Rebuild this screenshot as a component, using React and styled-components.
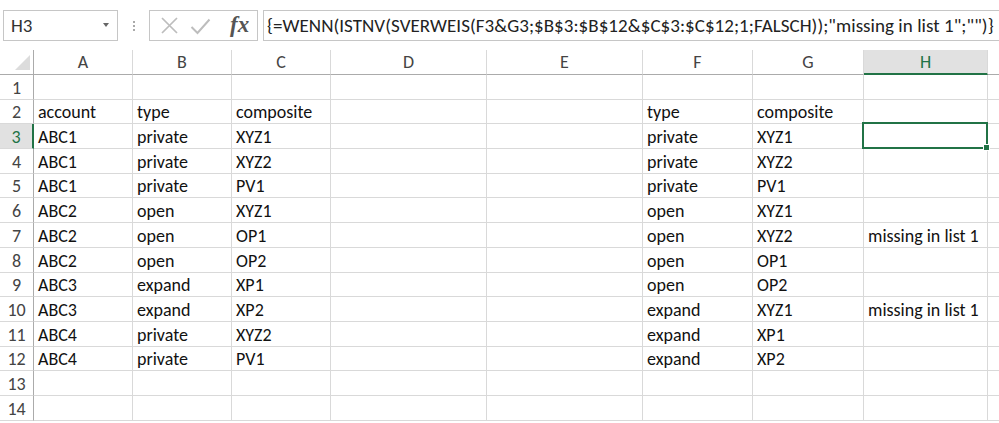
import React from "react";
import styled, { createGlobalStyle } from "styled-components";

const GREEN = "#217346";
const GRID = "#d9d9d9";
const FONT = `Carlito, Lato, "Liberation Sans", sans-serif`;

const Global = createGlobalStyle`
  html, body { margin: 0; padding: 0; background: #fff; }
  body { font-family: ${FONT}; overflow: hidden; }
`;

const Page = styled.div`
  width: 999px;
  height: 423px;
  display: flex;
  flex-direction: column;
  background: #fff;
  overflow: hidden;
`;

const FormulaBar = styled.div`
  display: flex;
  align-items: stretch;
  height: 31px;
  margin-top: 10px;
  padding-left: 3px;
`;

const NameBox = styled.div`
  width: 115px;
  box-sizing: border-box;
  border: 1px solid #c6c6c6;
  display: flex;
  align-items: center;
  justify-content: space-between;
  padding: 0 8px 0 7px;
  font-size: 19px;
  color: #333;
`;

const DropArrow = styled.span`
  width: 0;
  height: 0;
  border-left: 3.5px solid transparent;
  border-right: 3.5px solid transparent;
  border-top: 4px solid #666;
  margin-bottom: 2px;
`;

const Grip = styled.div`
  width: 31px;
  display: flex;
  flex-direction: column;
  align-items: center;
  justify-content: center;
  gap: 2px;
  & > span {
    width: 2px;
    height: 2px;
    background: #aaa;
  }
`;

const IconGroup = styled.div`
  width: 109px;
  box-sizing: border-box;
  border: 1px solid #c6c6c6;
  display: flex;
  align-items: center;
  padding-left: 10px;
  gap: 11px;
`;

const Fx = styled.span`
  font-family: "Liberation Serif", "DejaVu Serif", serif;
  font-style: italic;
  font-weight: bold;
  font-size: 23px;
  color: #555;
  margin-left: 8px;
  margin-top: -2px;
`;

const FormulaInput = styled.div`
  flex: 1;
  margin-left: 5px;
  box-sizing: border-box;
  border: 1px solid #c6c6c6;
  border-right: none;
  display: flex;
  align-items: center;
  padding-left: 3px;
  font-size: 19px;
  letter-spacing: 0.05px;
  color: #222;
  white-space: nowrap;
`;

const Sheet = styled.div`
  margin-top: 9px;
  display: grid;
  grid-template-columns: 34px 99px 99px 99px 156px 156px 110px 111px 124px 12px;
  grid-template-rows: 25px repeat(14, 24.7px);
`;

const Corner = styled.div`
  box-sizing: border-box;
  border-right: 1px solid #ababab;
  border-bottom: 1px solid #ababab;
  display: flex;
  align-items: flex-end;
  justify-content: flex-end;
  padding: 0 3px 4px 0;
`;

const Triangle = styled.div`
  width: 0;
  height: 0;
  border-left: 15px solid transparent;
  border-bottom: 15px solid #dcdcdc;
`;

const ColHead = styled.div`
  box-sizing: border-box;
  border-right: 1px solid ${GRID};
  border-bottom: ${(p) => (p.$active ? `2px solid ${GREEN}` : "1px solid #ababab")};
  background: ${(p) => (p.$active ? "#e1e1e1" : "#fff")};
  color: ${(p) => (p.$active ? GREEN : "#444")};
  display: flex;
  align-items: center;
  justify-content: center;
  font-size: 18px;
  padding-top: ${(p) => (p.$active ? "1px" : "0")};
`;

const RowHead = styled.div`
  box-sizing: border-box;
  border-right: ${(p) => (p.$active ? `2px solid ${GREEN}` : "1px solid #ababab")};
  border-bottom: 1px solid ${GRID};
  background: ${(p) => (p.$active ? "#e1e1e1" : "#fff")};
  color: ${(p) => (p.$active ? GREEN : "#444")};
  display: flex;
  align-items: flex-end;
  justify-content: center;
  padding-bottom: 0;
  font-size: 18px;
  line-height: 22px;
`;

const Cell = styled.div`
  position: relative;
  box-sizing: border-box;
  border-right: 1px solid ${(p) => (p.$noRight ? "transparent" : GRID)};
  border-bottom: 1px solid ${GRID};
  display: flex;
  align-items: flex-end;
  padding: 0 0 0 4px;
  font-size: 18px;
  line-height: 22px;
  color: #111;
  white-space: nowrap;
  overflow: visible;
`;

const Selection = styled.div`
  position: absolute;
  left: -2px;
  top: -2px;
  right: -1px;
  bottom: -1px;
  border: 2px solid ${GREEN};
  pointer-events: none;
  z-index: 2;
`;

const Handle = styled.div`
  position: absolute;
  right: -4px;
  bottom: -4px;
  width: 5px;
  height: 5px;
  background: ${GREEN};
  border: 1px solid #fff;
`;

const COLS = ["A", "B", "C", "D", "E", "F", "G", "H"];

const rows = {
  2: { A: "account", B: "type", C: "composite", F: "type", G: "composite" },
  3: { A: "ABC1", B: "private", C: "XYZ1", F: "private", G: "XYZ1" },
  4: { A: "ABC1", B: "private", C: "XYZ2", F: "private", G: "XYZ2" },
  5: { A: "ABC1", B: "private", C: "PV1", F: "private", G: "PV1" },
  6: { A: "ABC2", B: "open", C: "XYZ1", F: "open", G: "XYZ1" },
  7: { A: "ABC2", B: "open", C: "OP1", F: "open", G: "XYZ2", H: "missing in list 1" },
  8: { A: "ABC2", B: "open", C: "OP2", F: "open", G: "OP1" },
  9: { A: "ABC3", B: "expand", C: "XP1", F: "open", G: "OP2" },
  10: { A: "ABC3", B: "expand", C: "XP2", F: "expand", G: "XYZ1", H: "missing in list 1" },
  11: { A: "ABC4", B: "private", C: "XYZ2", F: "expand", G: "XP1" },
  12: { A: "ABC4", B: "private", C: "PV1", F: "expand", G: "XP2" },
};

const XIcon = () => (
  <svg width="19" height="19" viewBox="0 0 19 19">
    <path d="M2 2 L17 17 M17 2 L2 17" stroke="#bdbdbd" strokeWidth="1.7" fill="none" />
  </svg>
);

const CheckIcon = () => (
  <svg width="21" height="18" viewBox="0 0 21 18">
    <path d="M1.5 10 L7.5 16 L19.5 2.5" stroke="#bdbdbd" strokeWidth="2" fill="none" />
  </svg>
);

const FORMULA =
  '{=WENN(ISTNV(SVERWEIS(F3&G3;$B$3:$B$12&$C$3:$C$12;1;FALSCH));"missing in list 1";"")}';

export default function App() {
  const rowNums = Array.from({ length: 14 }, (_, i) => i + 1);
  return (
    <Page>
      <Global />
      <FormulaBar>
        <NameBox>
          <span>H3</span>
          <DropArrow />
        </NameBox>
        <Grip>
          <span />
          <span />
          <span />
        </Grip>
        <IconGroup>
          <XIcon />
          <CheckIcon />
          <Fx>fx</Fx>
        </IconGroup>
        <FormulaInput>{FORMULA}</FormulaInput>
      </FormulaBar>
      <Sheet>
        <Corner>
          <Triangle />
        </Corner>
        {COLS.map((c) => (
          <ColHead key={c} $active={c === "H"}>
            {c}
          </ColHead>
        ))}
        <ColHead />
        {rowNums.map((r) => (
          <React.Fragment key={r}>
            <RowHead $active={r === 3}>{r}</RowHead>
            {COLS.map((c) => (
              <Cell key={c}>
                {rows[r] && rows[r][c]}
                {r === 3 && c === "H" && (
                  <Selection>
                    <Handle />
                  </Selection>
                )}
              </Cell>
            ))}
            <Cell $noRight />
          </React.Fragment>
        ))}
      </Sheet>
    </Page>
  );
}
